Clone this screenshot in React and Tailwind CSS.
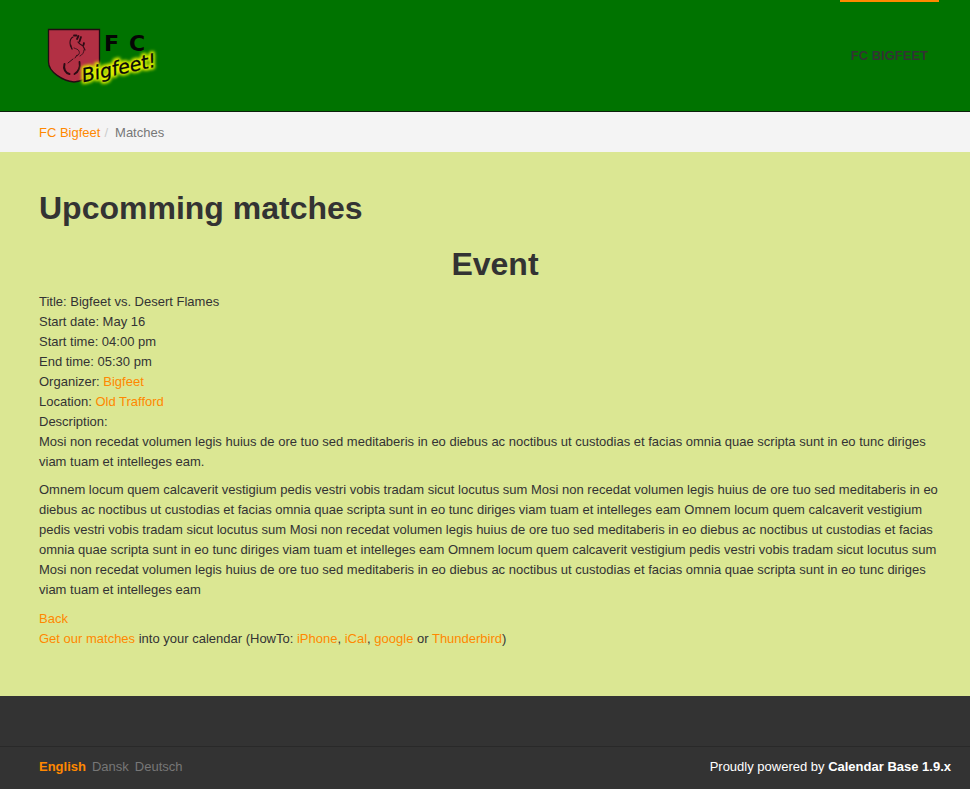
import React from "react";

const DETAILS = [
  ["Title", "Bigfeet vs. Desert Flames"],
  ["Start date", "May 16"],
  ["Start time", "04:00 pm"],
  ["End time", "05:30 pm"],
  ["Organizer", "Bigfeet", true],
  ["Location", "Old Trafford", true],
];

function Link({ children, className = "text-[#ff8800]" }) {
  return (
    <a href="#" className={className}>
      {children}
    </a>
  );
}

function Logo() {
  return (
    <svg viewBox="0 0 130 70" className="h-[70px] w-[130px]" role="img" aria-label="FC Bigfeet!">
      <defs>
        <filter id="glow" x="-20%" y="-60%" width="140%" height="220%">
          <feGaussianBlur stdDeviation="1.5" />
        </filter>
      </defs>
      <path
        d="M8.5 9.5H59.5V42C59.5 52 45 61 34 62C23 61 8.5 52 8.5 42Z"
        fill="#b23044"
        stroke="#210c12"
        strokeWidth="1.3"
      />
      <g fill="none" stroke="#2b0b14" strokeLinecap="round" strokeLinejoin="round">
        <path d="M34 15.500l2.500 0M37 19l1.500-3M41 17l-1.500 4.500M44 23l-.5 2" strokeWidth="1.800" />
        <path d="M33 17c-2 1-3 3-3 6c0 3 .5 4 2 6M38 22c1 2 3 3 5 4l2 4" strokeWidth="1.100" />
        <path d="M31 25l1 4M34 28c2 1 4 1 5 3s0 4-2 5M44 30c0 3-2 5-4 6" strokeWidth="0.800" />
        <path d="M37 35l-2 3M33 39l-5 4" strokeWidth="0.900" />
        <path d="M24.500 44c-1.500 5 1 9 5 10" strokeWidth="2" />
        <path d="M39.500 42c1 5-1 10-5 12" strokeWidth="1.800" />
      </g>
      <g fontFamily="'DejaVu Sans', sans-serif" fontWeight="bold" fontSize="22" fill="#050505">
        <text x="64" y="31">F</text>
        <text x="89" y="31">C</text>
      </g>
      <g transform="rotate(-12 44 61)" fontFamily="'DejaVu Sans', sans-serif" fontStyle="italic" fontSize="19">
        <text x="43" y="62" fill="#e8f500" stroke="#dcee00" strokeWidth="4" strokeLinejoin="round" filter="url(#glow)" aria-hidden="true">
          Bigfeet!
        </text>
        <text x="43" y="62" fill="#080808" stroke="#080808" strokeWidth="0.3">Bigfeet!</text>
      </g>
    </svg>
  );
}

export default function App() {
  return (
    <div className="min-h-screen bg-[#333333] font-['Liberation_Sans',Arial,sans-serif] text-[13px] leading-5 text-[#333333]">
      <header className="flex h-28 items-start justify-between border-b border-[#0c200c] bg-[#007300] pr-[31px] pl-10">
        <a href="#" className="pt-5">
          <Logo />
        </a>
        <nav>
          <a href="#" className="flex h-[110px] items-center border-t-2 border-[#ff8800] px-[11px] font-bold uppercase">
            FC Bigfeet
          </a>
        </nav>
      </header>

      <nav aria-label="Breadcrumb" className="bg-[#f4f4f4] px-[39px] pt-[11px] pb-[9px]">
        <ol className="flex">
          <li>
            <Link>FC Bigfeet</Link>
            <span className="px-1 text-[#cccccc]">/</span>
          </li>
          <li className="pl-[3px] text-[#777777]">Matches</li>
        </ol>
      </nav>

      <main className="bg-[#dbe793] pt-9 pr-[19px] pb-[47px] pl-[39px]">
        <h1 className="text-[32px] leading-10 font-bold">Upcomming matches</h1>
        <h1 className="mt-4 mb-2 text-center text-[32px] leading-10 font-bold">Event</h1>
        {DETAILS.map(([label, value, linked]) => (
          <div key={label}>
            {label}: {linked ? <Link>{value}</Link> : value}
          </div>
        ))}
        <div>Description:</div>
        <p className="mb-2">
          Mosi non recedat volumen legis huius de ore tuo sed meditaberis in eo diebus ac noctibus ut custodias et
          facias omnia quae scripta sunt in eo tunc diriges viam tuam et intelleges eam.
        </p>
        <p className="mb-[9px]">
          Omnem locum quem calcaverit vestigium pedis vestri vobis tradam sicut locutus sum Mosi non recedat volumen
          legis huius de ore tuo sed meditaberis in eo diebus ac noctibus ut custodias et facias omnia quae scripta
          sunt in eo tunc diriges viam tuam et intelleges eam Omnem locum quem calcaverit vestigium pedis vestri vobis
          tradam sicut locutus sum Mosi non recedat volumen legis huius de ore tuo sed meditaberis in eo diebus ac
          noctibus ut custodias et facias omnia quae scripta sunt in eo tunc diriges viam tuam et intelleges eam Omnem
          locum quem calcaverit vestigium pedis vestri vobis tradam sicut locutus sum Mosi non recedat volumen legis
          huius de ore tuo sed meditaberis in eo diebus ac noctibus ut custodias et facias omnia quae scripta sunt in
          eo tunc diriges viam tuam et intelleges eam
        </p>
        <div>
          <Link>Back</Link>
        </div>
        <div>
          <Link>Get our matches</Link> into your calendar (HowTo: <Link>iPhone</Link>, <Link>iCal</Link>,{" "}
          <Link>google</Link> or <Link>Thunderbird</Link>)
        </div>
      </main>

      <footer className="pt-[50px]">
        <div className="flex justify-between border-t border-[#292929] pt-[10px] pr-[19px] pb-3 pl-[39px]">
          <nav aria-label="Language" className="flex gap-[6px]">
            <Link className="font-bold text-[#ff8800]">English</Link>
            <Link className="text-[#777777]">Dansk</Link>
            <Link className="text-[#777777]">Deutsch</Link>
          </nav>
          <p className="text-white">
            Proudly powered by <Link className="font-bold text-white">Calendar Base 1.9.x</Link>
          </p>
        </div>
      </footer>
    </div>
  );
}
